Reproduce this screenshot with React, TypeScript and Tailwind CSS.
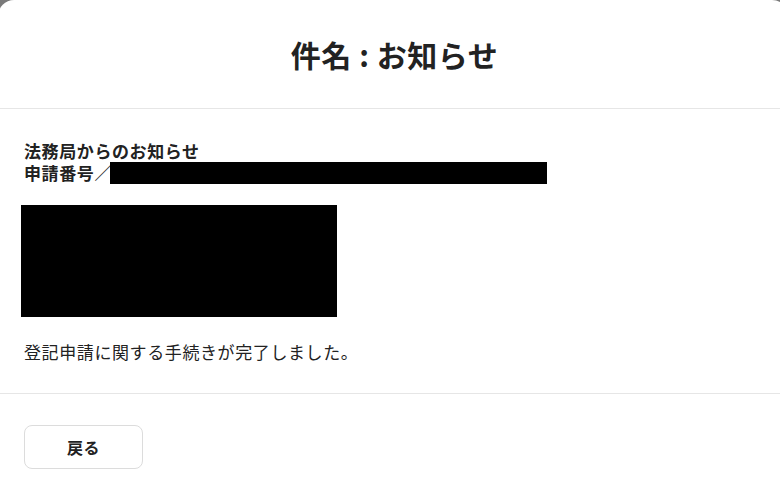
const font = { fontFamily: '"Noto Sans CJK JP", "Noto Sans", sans-serif' };

export default function App() {
  return (
    <div className="h-[491px] w-[780px] overflow-hidden bg-[#7a7a7a]" style={font}>
      <div className="-ml-[2px] h-[500px] w-[790px] rounded-[16px] bg-white text-[#222]">
        <header className="flex h-[109px] items-center justify-center border-b border-[#e6e6e6] pl-[3px]">
          <h1 className="text-[30px] font-bold leading-none tracking-[0.5px]">件名 : お知らせ</h1>
        </header>

        <section className="border-b border-[#e6e6e6] pb-[30px] pl-[26px] pt-[31px]">
          <div className="text-[17px] font-bold leading-[22px] tracking-[0.6px]">
            <p>法務局からのお知らせ</p>
            <p className="flex items-center">
              申請番号／
              <span className="-ml-[2px] inline-block h-[22px] w-[437px] bg-black" />
            </p>
          </div>
          <div className="-ml-[3px] mt-[21px] h-[112px] w-[316px] bg-black" />
          <p className="mt-[24px] text-[17px] leading-[22px] tracking-[0.6px]">
            登記申請に関する手続きが完了しました。
          </p>
        </section>

        <footer className="pl-[26px] pt-[31px]">
          <button
            type="button"
            className="flex h-[44px] w-[119px] items-center justify-center rounded-[8px] border border-[#dcdcdc] bg-white text-[16px] font-bold tracking-[0.5px] text-[#222]"
          >
            戻る
          </button>
        </footer>
      </div>
    </div>
  );
}
